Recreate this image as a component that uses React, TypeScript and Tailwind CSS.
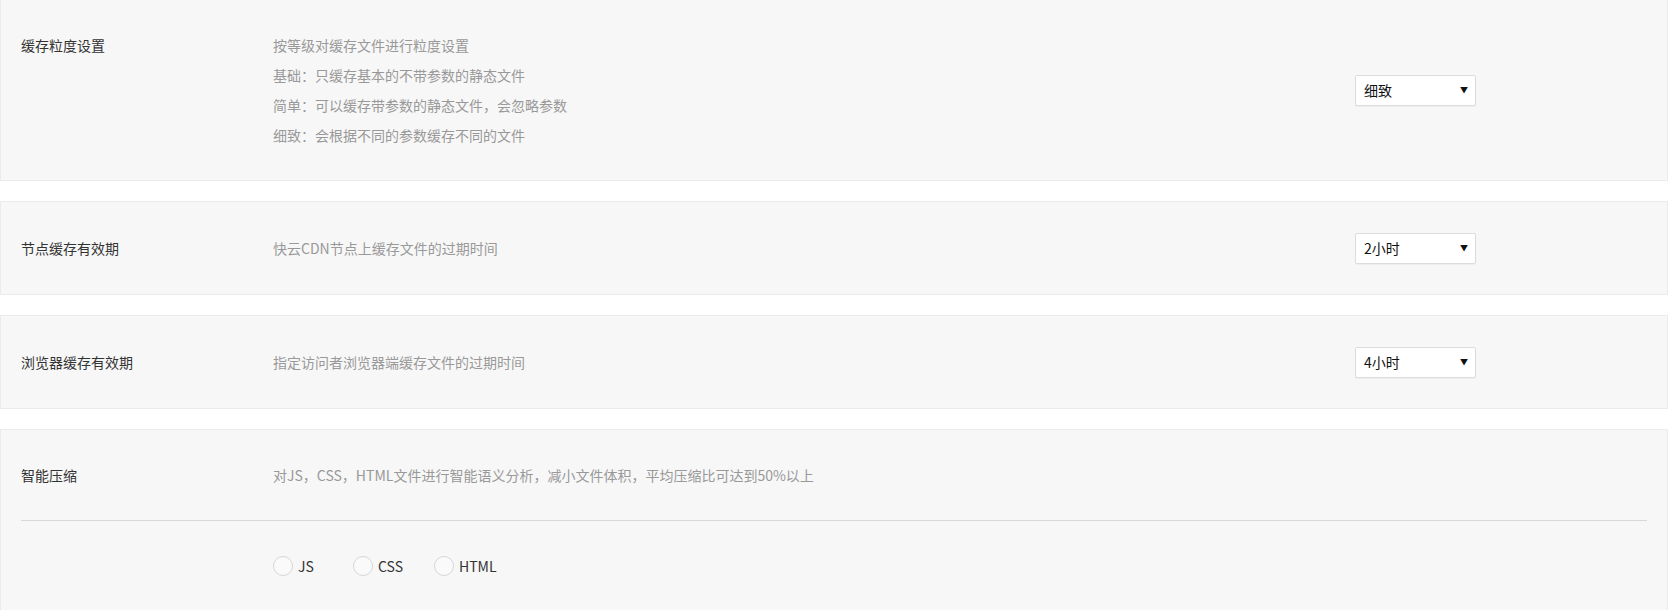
import React from "react";

const font = { fontFamily: '"Noto Sans CJK SC", "Noto Sans", sans-serif' };

function Select({ value }: { value: string }) {
  return (
    <div className="flex h-[31px] w-[121px] items-center justify-between rounded-[2px] border border-[#dcdcdc] bg-white pl-[8px] pr-[7px] text-[14px] text-[#111] shadow-[0_1px_1px_rgba(0,0,0,0.04)]">
      <span>{value}</span>
      <span className="text-[8px] leading-none text-[#111]">▼</span>
    </div>
  );
}

function Row({
  label,
  lines,
  select,
  className = "",
}: {
  label: string;
  lines: string[];
  select?: string;
  className?: string;
}) {
  return (
    <div className={"flex items-center " + className}>
      <div className="flex flex-1 items-start">
        <div className="w-[252px] shrink-0 text-[14px] leading-[30px] text-[#333]">{label}</div>
        <div className="flex flex-col text-[14px] leading-[30px] text-[#999]">
          {lines.map((l) => (
            <div key={l}>{l}</div>
          ))}
        </div>
      </div>
      {select && (
        <div className="mr-[171px] shrink-0">
          <Select value={select} />
        </div>
      )}
    </div>
  );
}

function Radio({ label, w }: { label: string; w?: string }) {
  return (
    <div className={"flex items-center gap-[5px] " + (w ?? "")}>
      <span className="h-[20px] w-[20px] rounded-full border border-[#d6d6d6] bg-[#fafafa]" />
      <span className="text-[14px] text-[#333]">{label}</span>
    </div>
  );
}

export default function App() {
  return (
    <div style={font} className="min-h-[610px] w-full bg-white pr-[2px]">
      <div className="flex flex-col gap-[20px]">
        <div className="border border-t-0 border-[#ebebeb] bg-[#f7f7f7] px-[20px] py-[30px]">
          <Row
            label="缓存粒度设置"
            lines={[
              "按等级对缓存文件进行粒度设置",
              "基础：只缓存基本的不带参数的静态文件",
              "简单：可以缓存带参数的静态文件，会忽略参数",
              "细致：会根据不同的参数缓存不同的文件",
            ]}
            select="细致"
          />
        </div>
        <div className="border border-[#ebebeb] bg-[#f7f7f7] px-[20px] py-[30px]">
          <Row
            label="节点缓存有效期"
            lines={["快云CDN节点上缓存文件的过期时间"]}
            select="2小时"
            className="h-[32px]"
          />
        </div>
        <div className="border border-[#ebebeb] bg-[#f7f7f7] px-[20px] py-[30px]">
          <Row
            label="浏览器缓存有效期"
            lines={["指定访问者浏览器端缓存文件的过期时间"]}
            select="4小时"
            className="h-[32px]"
          />
        </div>
        <div className="border border-[#ebebeb] bg-[#f7f7f7] px-[20px]">
          <div className="py-[30px]">
            <Row
              label="智能压缩"
              lines={["对JS，CSS，HTML文件进行智能语义分析，减小文件体积，平均压缩比可达到50%以上"]}
            />
          </div>
          <div className="border-t border-[#d8d8d8]" />
          <div className="flex h-[90px] items-center pl-[252px]">
            <Radio label="JS" w="w-[80px]" />
            <Radio label="CSS" w="w-[81px]" />
            <Radio label="HTML" />
          </div>
        </div>
      </div>
    </div>
  );
}
